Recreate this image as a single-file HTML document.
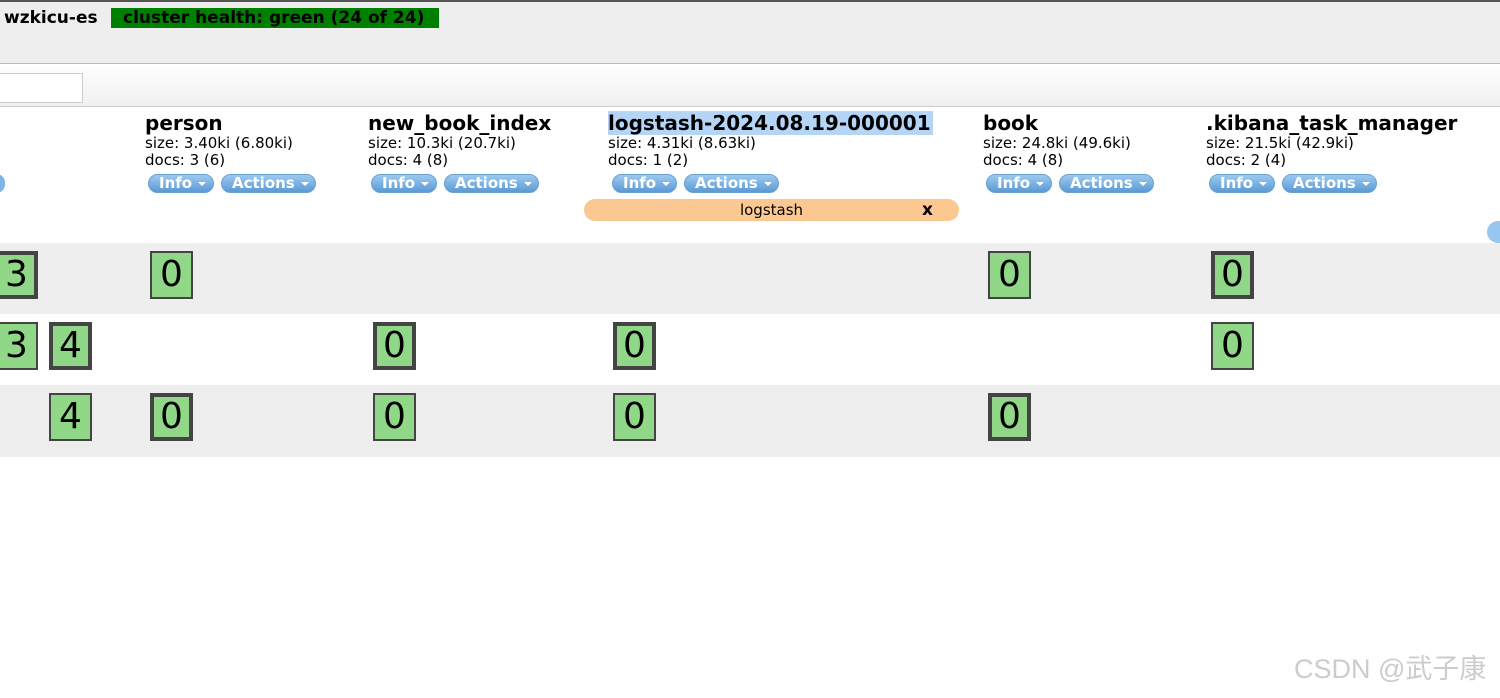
<!DOCTYPE html>
<html><head><meta charset="utf-8"><style>
*{margin:0;padding:0;box-sizing:border-box}
body{width:1500px;height:698px;overflow:hidden;background:#fff;font-family:"DejaVu Sans","Liberation Sans",sans-serif;color:#000;position:relative}
.a{position:absolute}
.top{left:0;top:0;width:1500px;height:64px;background:#eee;border-top:2px solid #555;border-bottom:1px solid #bbb}
.bar{left:0;top:64px;width:1500px;height:43px;background:linear-gradient(#fff,#f0f0f0);border-bottom:1px solid #ccc}
.t{font-weight:bold;font-size:20px;white-space:nowrap;line-height:24px}
.s{font-size:15px;line-height:17px;white-space:nowrap}
.btn{height:19px;border-radius:10px;background:linear-gradient(#9ccaf0,#5a9ad6);border:1px solid #6aa0d0;color:#fff;font-weight:bold;font-size:15px;line-height:17px;padding-left:10px;white-space:nowrap}
.btn:after{content:"";display:inline-block;margin-left:6px;border-left:4px solid transparent;border-right:4px solid transparent;border-top:4px solid #fff;vertical-align:middle}
.row{left:0;width:1500px;height:71px}
.b{width:43px;height:48px;background:#90d888;font-size:36px;line-height:44px;text-align:center;border:2px solid #444}
.p{border:4px solid #444;line-height:40px}
</style></head><body>
<div class="a top"></div>
<div class="a t" style="left:4px;top:7px;font-size:17px;line-height:22px">wzkicu-es</div>
<div class="a" style="left:111px;top:8px;width:328px;height:20px;background:#008000;font-weight:bold;font-size:17px;line-height:20px;padding-left:12px;white-space:nowrap">cluster health: green (24 of 24)</div>
<div class="a bar"></div>
<div class="a" style="left:-5px;top:73px;width:88px;height:30px;background:#fff;border:1px solid #ccc"></div>

<div class="a row" style="top:243px;background:#eee"></div>
<div class="a row" style="top:385px;height:72px;background:#eee"></div>

<div class="a t" style="left:145px;top:111px">person</div>
<div class="a s" style="left:145px;top:135px">size: 3.40ki (6.80ki)<br>docs: 3 (6)</div>
<div class="a btn" style="left:148px;top:174px;width:66px">Info</div>
<div class="a btn" style="left:221px;top:174px;width:95px">Actions</div>

<div class="a t" style="left:368px;top:111px">new_book_index</div>
<div class="a s" style="left:368px;top:135px">size: 10.3ki (20.7ki)<br>docs: 4 (8)</div>
<div class="a btn" style="left:371px;top:174px;width:66px">Info</div>
<div class="a btn" style="left:444px;top:174px;width:95px">Actions</div>

<div class="a t" style="left:608px;top:111px;background:#b4d5f5;padding-right:2px">logstash-2024.08.19-000001</div>
<div class="a s" style="left:608px;top:135px">size: 4.31ki (8.63ki)<br>docs: 1 (2)</div>
<div class="a btn" style="left:612px;top:174px;width:65px">Info</div>
<div class="a btn" style="left:684px;top:174px;width:95px">Actions</div>
<div class="a" style="left:584px;top:199px;width:375px;height:22px;border-radius:11px;background:#fcc891;font-size:15px;line-height:22px;text-align:center">logstash</div>
<div class="a" style="left:922px;top:199px;font-weight:bold;font-size:17px;line-height:22px">x</div>

<div class="a t" style="left:983px;top:111px">book</div>
<div class="a s" style="left:983px;top:135px">size: 24.8ki (49.6ki)<br>docs: 4 (8)</div>
<div class="a btn" style="left:986px;top:174px;width:66px">Info</div>
<div class="a btn" style="left:1059px;top:174px;width:95px">Actions</div>

<div class="a t" style="left:1206px;top:111px">.kibana_task_manager</div>
<div class="a s" style="left:1206px;top:135px">size: 21.5ki (42.9ki)<br>docs: 2 (4)</div>
<div class="a btn" style="left:1209px;top:174px;width:66px">Info</div>
<div class="a btn" style="left:1282px;top:174px;width:95px">Actions</div>

<div class="a" style="left:-12px;top:174px;width:17px;height:19px;border-radius:10px;background:#7fb4e6"></div>
<div class="a" style="left:1487px;top:221px;width:30px;height:22px;border-radius:11px;background:#98c6ee"></div>

<div class="a b p" style="left:-5px;top:251px">3</div>
<div class="a b" style="left:150px;top:251px">0</div>
<div class="a b" style="left:988px;top:251px">0</div>
<div class="a b p" style="left:1211px;top:251px">0</div>

<div class="a b" style="left:-5px;top:322px">3</div>
<div class="a b p" style="left:49px;top:322px">4</div>
<div class="a b p" style="left:373px;top:322px">0</div>
<div class="a b p" style="left:613px;top:322px">0</div>
<div class="a b" style="left:1211px;top:322px">0</div>

<div class="a b" style="left:49px;top:393px">4</div>
<div class="a b p" style="left:150px;top:393px">0</div>
<div class="a b" style="left:373px;top:393px">0</div>
<div class="a b" style="left:613px;top:393px">0</div>
<div class="a b p" style="left:988px;top:393px">0</div>

<div class="a" style="left:1294px;top:652px;font-size:27px;line-height:34px;color:#ccc;font-family:'Liberation Sans','Noto Sans CJK SC',sans-serif;white-space:nowrap">CSDN @武子康</div>
</body></html>
